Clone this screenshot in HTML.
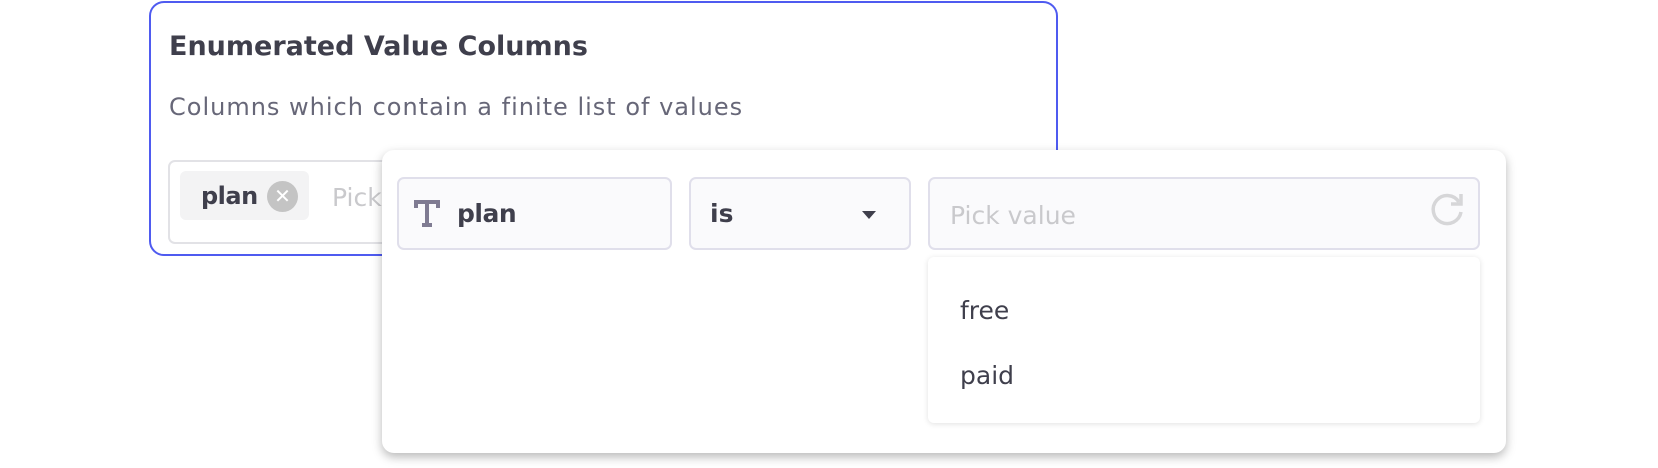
<!DOCTYPE html>
<html><head><meta charset="utf-8"><style>
*{box-sizing:border-box;margin:0;padding:0}
body{width:1658px;height:468px;background:#fff;position:relative;overflow:hidden;font-family:"DejaVu Sans",sans-serif}
.card{position:absolute;left:149px;top:1px;width:909px;height:255px;border:2px solid #4f5bf0;border-radius:15px;background:#fff}
.title{position:absolute;left:169px;top:31px;font-size:27px;font-weight:bold;color:#3f3f4c}
.sub{position:absolute;left:169px;top:93px;font-size:24px;color:#676778;letter-spacing:1px}
.inp{position:absolute;left:168px;top:160px;width:400px;height:84px;border:2px solid #e2e2e6;border-radius:7px;background:#fff}
.chip{position:absolute;left:180px;top:171px;width:129px;height:49px;background:#f3f3f4;border-radius:6px}
.chip span{position:absolute;left:21px;top:11px;font-size:24px;font-weight:bold;color:#3f3f4c;letter-spacing:-0.5px}
.x{position:absolute;left:87px;top:10px;width:31px;height:31px;border-radius:50%;background:#c4c4c4;color:#fff;font-size:20px;font-weight:bold;text-align:center;line-height:31px}
.pick1{position:absolute;left:332px;top:183px;font-size:25px;color:#c9c9cc}
.pop{position:absolute;left:382px;top:150px;width:1124px;height:303px;background:#fff;border-radius:12px;box-shadow:0 4px 10px rgba(0,0,0,.28)}
.f{position:absolute;top:177px;height:73px;background:#fafafc;border:2px solid #e0dfeb;border-radius:7px}
.t{position:absolute;font-size:25px;color:#3f3f4c}
.list{position:absolute;left:928px;top:257px;width:552px;height:166px;background:#fff;border-radius:6px;box-shadow:0 1px 6px rgba(0,0,0,.12)}
</style></head><body>
<div class="card"></div>
<div class="title">Enumerated Value Columns</div>
<div class="sub">Columns which contain a finite list of values</div>
<div class="inp"></div>
<div class="chip"><span>plan</span><div class="x">✕</div></div>
<div class="pick1">Pick</div>
<div class="pop"></div>
<div class="f" style="left:397px;width:275px"></div>
<svg style="position:absolute;left:414px;top:200px" width="26" height="28" viewBox="0 0 26 28"><path d="M2 8V2h22v6M13 2v23M8 25h10" fill="none" stroke="#7f7b92" stroke-width="4"/></svg>
<div class="t" style="left:457px;top:199px;font-weight:bold;letter-spacing:-0.5px">plan</div>
<div class="f" style="left:689px;width:222px"></div>
<div class="t" style="left:710px;top:199px;font-weight:bold">is</div>
<div style="position:absolute;left:862px;top:211px;border-left:7px solid transparent;border-right:7px solid transparent;border-top:8px solid #3f3f4c"></div>
<div class="f" style="left:928px;width:552px"></div>
<div class="t" style="left:950px;top:201px;color:#c9c9cc">Pick value</div>
<svg style="position:absolute;left:1428px;top:190px" width="38" height="38" viewBox="0 0 38 38"><path d="M31 12A14 14 0 1 0 33 22" fill="none" stroke="#d6d6d8" stroke-width="3.5"/><path d="M33 4v10H23" fill="none" stroke="#d6d6d8" stroke-width="3.5"/></svg>
<div class="list"></div>
<div class="t" style="left:960px;top:296px">free</div>
<div class="t" style="left:960px;top:361px">paid</div>
</body></html>
